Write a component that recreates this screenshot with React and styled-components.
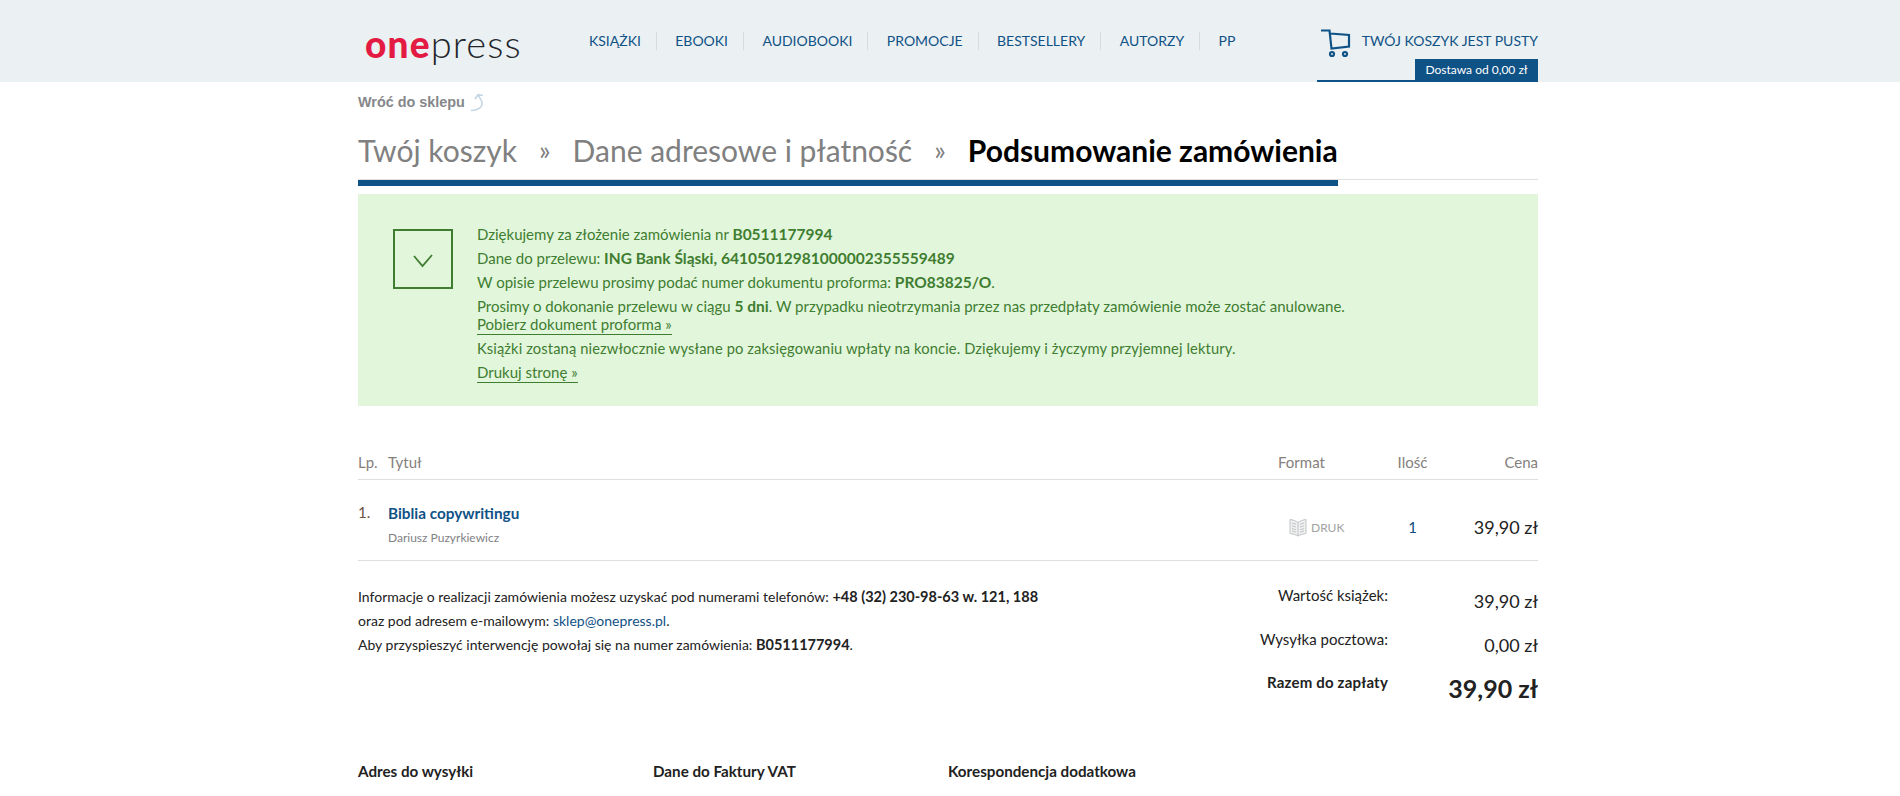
import React from "react";
import styled, { createGlobalStyle } from "styled-components";

const Global = createGlobalStyle`
  html, body { margin: 0; padding: 0; background: #fff; overflow: hidden; height: 796px; }
  body { font-family: Lato, "Liberation Sans", sans-serif; color: #222; }
  a { text-decoration: none; color: inherit; }
`;

const HeaderBar = styled.header`
  background: #ebf0f3;
  height: 82px;
`;
const Wrap = styled.div`
  width: 1180px;
  margin: 0 0 0 358px;
`;
const HeaderInner = styled(Wrap)`
  display: flex;
  height: 82px;
`;
const Logo = styled.a`
  display: block;
  width: 200px;
  padding: 21px 0 0 7px;
  box-sizing: border-box;
  font-size: 38px;
  line-height: 44px;
  white-space: nowrap;
`;
const LogoOne = styled.span`
  color: #e31b43;
  font-weight: 900;
  font-size: 37px;
  letter-spacing: 1.2px;
  position: relative;
  &::after {
    content: "";
    position: absolute;
    left: 9px;
    top: 11px;
    width: 3px;
    height: 4px;
    background: #ebf0f3;
  }
`;
const LogoPress = styled.span`
  color: #22262a;
  font-weight: 300;
  letter-spacing: 1.1px;
`;
const Nav = styled.nav`
  display: flex;
  align-items: center;
  height: 18px;
  margin: 32px 0 0 31px;
`;
const NavItem = styled.a`
  font-size: 14px;
  color: #0f5286;
  line-height: 18px;
  padding: 0 15px 0 18.4px;
  border-right: 1px solid #d5dbdf;
  &:first-child { padding-left: 0; }
  &:last-child { border-right: 0; }
`;
const Cart = styled.div`
  margin-left: auto;
  width: 221px;
  height: 82px;
  box-sizing: border-box;
  border-bottom: 2px solid #0f5286;
  position: relative;
`;
const CartTop = styled.div`
  display: flex;
  align-items: flex-start;
  justify-content: flex-end;
  gap: 11px;
  padding-top: 29px;
  font-size: 14px;
  color: #0f5286;
  line-height: 24px;
  white-space: nowrap;
`;
const CartIcon = styled.svg`
  width: 30px;
  height: 29px;
  flex: none;
`;
const Delivery = styled.div`
  position: absolute;
  right: 0;
  bottom: -2px;
  width: 123px;
  height: 23px;
  background: #0f5286;
  color: #fff;
  font-size: 12px;
  line-height: 21px;
  text-align: center;
`;
const Back = styled.a`
  display: flex;
  align-items: center;
  gap: 5px;
  height: 22px;
  margin-top: 9px;
  font-family: "Liberation Sans", Arial, sans-serif;
  font-weight: 700;
  font-size: 14.4px;
  color: #85878a;
`;
const Steps = styled.div`
  display: flex;
  align-items: center;
  height: 38px;
  margin-top: 18px;
  font-size: 30px;
  line-height: 38px;
  color: #808080;
  white-space: nowrap;
`;
const Sep = styled.span`
  font-size: 27px;
  margin: 0 ${(p) => p.$m}px;
`;
const Current = styled.span`
  color: #000;
  font-weight: 700;
`;
const Progress = styled.div`
  margin-top: 10px;
  height: 7px;
  border-top: 1px solid #dfe0e1;
  box-sizing: border-box;
`;
const ProgressFill = styled.div`
  height: 6px;
  width: 980px;
  background: #0f5286;
`;
const Alert = styled.section`
  margin-top: 8px;
  height: 212px;
  background: #e2f6dc;
  color: #3f7d30;
  display: flex;
  box-sizing: border-box;
  padding: 35px 0 0 35px;
  font-size: 15px;
`;
const CheckBox = styled.div`
  width: 60px;
  height: 60px;
  box-sizing: border-box;
  border: 2px solid #3f7d30;
  display: flex;
  align-items: center;
  justify-content: center;
  flex: none;
  svg { margin-top: 3px; }
`;
const AlertText = styled.div`
  margin: -7px 0 0 24px;
`;
const Line = styled.div`
  line-height: 24.15px;
  height: ${(p) => (p.$tight ? 17.6 : 24)}px;
  font-size: ${(p) => (p.$narrow ? 14.7 : 15)}px;
  letter-spacing: ${(p) => (p.$narrow ? "0.12px" : "normal")};
  b { font-weight: 700; font-size: 15.5px; }
`;
const GreenLink = styled.a`
  border-bottom: 1px solid #3f7d30;
  padding-bottom: 1px;
`;
const Row = styled.div`
  display: grid;
  grid-template-columns: 30px 1fr 120px 45px 103px;
  align-items: center;
  height: ${(p) => p.$h}px;
  border-bottom: 1px solid #dfe0e1;
  box-sizing: border-box;
`;
const HeadRow = styled(Row)`
  margin-top: 44px;
  font-size: 15px;
  color: #85807c;
  padding-bottom: 6px;
`;
const ItemRow = styled(Row)`
  padding-top: 12px;
`;
const RightCell = styled.div`
  text-align: ${(p) => p.$align || "right"};
`;
const FormatHead = styled.div`
  font-size: 15px;
  margin-left: 8px;
`;
const TitleCell = styled.div`
  display: flex;
  flex-direction: column;
`;
const BookTitle = styled.a`
  font-size: 15.3px;
  font-weight: 700;
  color: #0f5286;
  line-height: 20px;
  margin-top: -4px;
`;
const Author = styled.div`
  font-size: 12px;
  line-height: 16px;
  color: #7f8184;
  margin-top: 7px;
`;
const Num = styled.div`
  font-size: 15px;
  color: #6b5240;
  margin-top: -28px;
`;
const Druk = styled.div`
  display: flex;
  align-items: center;
  gap: 4px;
  font-size: 12px;
  color: #a0a2a5;
  margin: 3px 0 0 19px;
  white-space: nowrap;
  svg { flex: none; }
`;
const Qty = styled.div`
  color: #0f4a7a;
  font-size: 15px;
  margin-top: 1px;
  text-align: center;
`;
const Price = styled.div`
  font-size: 18px;
  text-align: right;
  color: #222;
  margin-top: 1px;
`;
const Bottom = styled.div`
  display: flex;
  justify-content: space-between;
  padding-top: 24px;
`;
const Info = styled.div`
  font-size: 14px;
  line-height: 24px;
  color: #222;
  b { font-weight: 700; font-size: 14.5px; }
  a { color: #0f5286; }
`;
const Summary = styled.div`
  width: 286px;
  margin-top: -2px;
`;
const SummaryRow = styled.div`
  display: flex;
  justify-content: space-between;
  height: 43.5px;
`;
const SummaryLabel = styled.div`
  width: 136px;
  text-align: right;
  font-size: 15px;
  font-weight: ${(p) => (p.$bold ? 700 : 400)};
  letter-spacing: ${(p) => (p.$bold ? "0.2px" : "normal")};
  line-height: 24px;
  white-space: nowrap;
  direction: rtl;
  unicode-bidi: plaintext;
`;
const SummaryValue = styled.div`
  font-size: ${(p) => (p.$big ? 25 : 18)}px;
  font-weight: ${(p) => (p.$big ? 700 : 400)};
  line-height: 24px;
  padding-top: 6px;
`;
const Columns = styled.div`
  display: grid;
  grid-template-columns: repeat(3, 295px);
  margin-top: 45px;
`;
const ColTitle = styled.div`
  font-size: 15.2px;
  font-weight: 700;
  line-height: 24px;
  color: #222;
`;

const Book = () => (
  <svg width="18" height="19" viewBox="0 0 18 19" fill="none" stroke="#c2c4c6" strokeWidth="1">
    <path d="M9 4.5 C7 2.8 3.5 1.8 1 1.5 V15.5 C3.5 15.8 7 16.8 9 18 C11 16.8 14.5 15.8 17 15.5 V1.5 C14.5 1.8 11 2.8 9 4.5 Z" fill="#eff0f0" />
    <path d="M9 4.5 V18 M3 5 L7 6.2 M3 7.8 L7 9 M3 10.6 L7 11.8 M3 13 L7 14.2 M11 6.2 L15 5 M11 9 L15 7.8 M11 11.8 L15 10.6 M11 14.2 L15 13" />
  </svg>
);

export default function App() {
  return (
    <>
      <Global />
      <HeaderBar>
        <HeaderInner>
          <Logo href="#">
            <LogoOne>one</LogoOne>
            <LogoPress>press</LogoPress>
          </Logo>
          <Nav>
            {["KSIĄŻKI", "EBOOKI", "AUDIOBOOKI", "PROMOCJE", "BESTSELLERY", "AUTORZY", "PP"].map((n) => (
              <NavItem href="#" key={n}>{n}</NavItem>
            ))}
          </Nav>
          <Cart>
            <CartTop>
              <CartIcon viewBox="0 0 30 29" fill="none" stroke="#0f5286">
                <path d="M0 1.5 H8.5 L10.5 19.5 L28 17.5 V6 L9.2 4.5" strokeWidth="2.2" />
                <circle cx="11" cy="25" r="2" strokeWidth="2.2" />
                <circle cx="24" cy="25" r="2" strokeWidth="2.2" />
              </CartIcon>
              <span>TWÓJ KOSZYK JEST PUSTY</span>
            </CartTop>
            <Delivery>Dostawa od 0,00 zł</Delivery>
          </Cart>
        </HeaderInner>
      </HeaderBar>
      <Wrap>
        <Back href="#">
          Wróć do sklepu
          <svg width="14" height="19" viewBox="0 0 14 19" fill="none" stroke="#c5d5e2" strokeWidth="1.6">
            <path d="M1 17.5 C7 18 13 14 12 9.5 C11.5 6.5 9.5 5 8 1.5 M8 1.5 L5 6 M8 1.5 L13 2.5" />
          </svg>
        </Back>
        <Steps>
          Twój koszyk<Sep $m={22}>»</Sep>Dane adresowe i płatność<Sep $m={22}>»</Sep>
          <Current>Podsumowanie zamówienia</Current>
        </Steps>
        <Progress><ProgressFill /></Progress>
        <Alert>
          <CheckBox>
            <svg width="20" height="14" viewBox="0 0 20 14" fill="none" stroke="#3f7d30" strokeWidth="1.8">
              <path d="M1 2 L9.5 12 L19 1" />
            </svg>
          </CheckBox>
          <AlertText>
            <Line>Dziękujemy za złożenie zamówienia nr <b>B0511177994</b></Line>
            <Line>Dane do przelewu: <b>ING Bank Śląski, 64105012981000002355559489</b></Line>
            <Line>W opisie przelewu prosimy podać numer dokumentu proforma: <b>PRO83825/O</b>.</Line>
            <Line $tight>Prosimy o dokonanie przelewu w ciągu <b>5 dni</b>. W przypadku nieotrzymania przez nas przedpłaty zamówienie może zostać anulowane.</Line>
            <Line><GreenLink href="#">Pobierz dokument proforma »</GreenLink></Line>
            <Line $narrow>Książki zostaną niezwłocznie wysłane po zaksięgowaniu wpłaty na koncie. Dziękujemy i życzymy przyjemnej lektury.</Line>
            <Line><GreenLink href="#">Drukuj stronę »</GreenLink></Line>
          </AlertText>
        </Alert>
        <HeadRow $h={30}>
          <div>Lp.</div>
          <div>Tytuł</div>
          <FormatHead>Format</FormatHead>
          <RightCell $align="center">Ilość</RightCell>
          <RightCell>Cena</RightCell>
        </HeadRow>
        <ItemRow $h={81}>
          <Num>1.</Num>
          <TitleCell>
            <BookTitle href="#">Biblia copywritingu</BookTitle>
            <Author>Dariusz Puzyrkiewicz</Author>
          </TitleCell>
          <Druk><Book />DRUK</Druk>
          <Qty>1</Qty>
          <Price>39,90 zł</Price>
        </ItemRow>
        <Bottom>
          <Info>
            Informacje o realizacji zamówienia możesz uzyskać pod numerami telefonów: <b>+48 (32) 230-98-63 w. 121, 188</b><br />
            oraz pod adresem e-mailowym: <a href="#">sklep@onepress.pl</a>.<br />
            Aby przyspieszyć interwencję powołaj się na numer zamówienia: <b>B0511177994</b>.
          </Info>
          <Summary>
            <SummaryRow>
              <SummaryLabel>Wartość książek:</SummaryLabel>
              <SummaryValue>39,90 zł</SummaryValue>
            </SummaryRow>
            <SummaryRow>
              <SummaryLabel>Wysyłka pocztowa:</SummaryLabel>
              <SummaryValue>0,00 zł</SummaryValue>
            </SummaryRow>
            <SummaryRow>
              <SummaryLabel $bold>Razem do zapłaty</SummaryLabel>
              <SummaryValue $big>39,90 zł</SummaryValue>
            </SummaryRow>
          </Summary>
        </Bottom>
        <Columns>
          <ColTitle>Adres do wysyłki</ColTitle>
          <ColTitle>Dane do Faktury VAT</ColTitle>
          <ColTitle>Korespondencja dodatkowa</ColTitle>
        </Columns>
      </Wrap>
    </>
  );
}
